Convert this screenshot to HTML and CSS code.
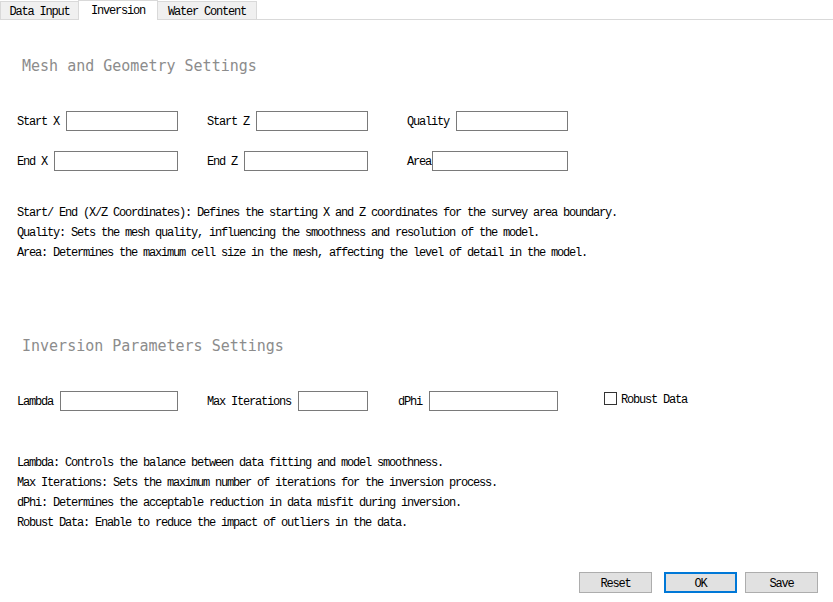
FILE: index.html
```html
<!DOCTYPE html>
<html>
<head>
<meta charset="utf-8">
<link rel="stylesheet" href="styles.css">
</head>
<body>
<div class="tabbar">
  <div class="tab tab-data">Data Input</div>
  <div class="tab tab-inv active">Inversion</div>
  <div class="tab tab-water">Water Content</div>
</div>
<div class="pane">
  <h2 class="section-title first">Mesh and Geometry Settings</h2>
  <div class="fields mesh">
    <label class="field"><span class="lbl">Start X</span><input class="box" type="text"></label>
    <label class="field"><span class="lbl">Start Z</span><input class="box" type="text"></label>
    <label class="field"><span class="lbl">Quality</span><input class="box" type="text"></label>
    <label class="field"><span class="lbl">End X</span><input class="box" type="text"></label>
    <label class="field"><span class="lbl">End Z</span><input class="box" type="text"></label>
    <label class="field tight"><span class="lbl">Area</span><input class="box" type="text"></label>
  </div>
  <div class="desc mesh-desc">
    <p>Start/ End (X/Z Coordinates): Defines the starting X and Z coordinates for the survey area boundary.</p>
    <p>Quality: Sets the mesh quality, influencing the smoothness and resolution of the model.</p>
    <p>Area: Determines the maximum cell size in the mesh, affecting the level of detail in the model.</p>
  </div>

  <h2 class="section-title second">Inversion Parameters Settings</h2>
  <div class="fields inv">
    <label class="field"><span class="lbl">Lambda</span><input class="box" type="text"></label>
    <label class="field"><span class="lbl">Max Iterations</span><input class="box" type="text"></label>
    <label class="field w160"><span class="lbl">dPhi</span><input class="box" type="text"></label>
    <label class="check"><span class="checkbox"></span><span class="check-text">Robust Data</span></label>
  </div>
  <div class="desc inv-desc">
    <p>Lambda: Controls the balance between data fitting and model smoothness.</p>
    <p>Max Iterations: Sets the maximum number of iterations for the inversion process.</p>
    <p>dPhi: Determines the acceptable reduction in data misfit during inversion.</p>
    <p>Robust Data: Enable to reduce the impact of outliers in the data.</p>
  </div>

  <div class="buttons">
    <button class="btn reset">Reset</button>
    <button class="btn ok">OK</button>
    <button class="btn save">Save</button>
  </div>
</div>
</body>
</html>
```
FILE: styles.css
```css
html, body {
  margin: 0;
  padding: 0;
  background: #ffffff;
}
body {
  width: 833px;
  height: 602px;
  overflow: hidden;
  font-family: "Liberation Mono", monospace;
  font-size: 12px;
  letter-spacing: -1.2px;
  color: #000;
}
.tabbar {
  display: flex;
  align-items: flex-end;
  height: 20px;
  box-sizing: border-box;
  border-bottom: 1px solid #d9d9d9;
  background: #ffffff;
}
.tab {
  box-sizing: border-box;
  height: 18px;
  background: #f0f0f0;
  border: 1px solid #d9d9d9;
  border-bottom: none;
  display: flex;
  align-items: flex-start;
  justify-content: center;
  line-height: 14px;
  padding-top: 3px;
}
.tab-data { width: 79px; }
.tab-inv { width: 80px; }
.tab-water { width: 100px; margin-left: -1px; }
.tab.active {
  height: 20px;
  margin-bottom: -1px;
  background: #fff;
  position: relative;
  z-index: 1;
  padding-top: 3px;
  margin-left: -1px;
}
.pane {
  display: flex;
  flex-direction: column;
  height: 582px;
  box-sizing: border-box;
  padding-bottom: 9px;
}
.section-title {
  margin: 0;
  font-family: "DejaVu Sans Mono", monospace;
  font-weight: normal;
  font-size: 15px;
  letter-spacing: 0;
  line-height: 20px;
  color: #8c8c8c;
  padding-left: 22px;
}
.section-title.first { margin-top: 36px; }
.section-title.second { margin-top: 73px; }
.fields {
  display: grid;
  row-gap: 20px;
  padding-left: 17px;
  margin-top: 35px;
}
.fields.mesh {
  grid-template-columns: 190px 200px 161px;
}
.fields.inv {
  grid-template-columns: 190px 191px 206px auto;
}
.field {
  width: 161px;
  height: 20px;
  display: flex;
  align-items: center;
}
.field.w160 { width: 160px; }
.lbl {
  white-space: nowrap;
  margin-right: 7px;
  padding-top: 2px;
}
.field.tight .lbl { margin-right: 1px; }
.box {
  flex: 1;
  min-width: 0;
  height: 20px;
  box-sizing: border-box;
  border: 1px solid #7a7a7a;
  margin: 0;
  padding: 0 2px;
  background: #fff;
  outline: none;
}
.check {
  display: flex;
  align-items: flex-start;
  height: 20px;
  padding-top: 1px;
  box-sizing: border-box;
}
.checkbox {
  width: 13px;
  height: 13px;
  box-sizing: border-box;
  border: 1px solid #333;
  background: #fff;
  margin-right: 4px;
}
.check-text {
  line-height: 17px;
}
.desc {
  padding-top: 1px;
}
.desc p {
  margin: 0;
  line-height: 20px;
  padding-left: 17px;
  white-space: nowrap;
}
.mesh-desc { margin-top: 31px; }
.inv-desc { margin-top: 41px; }
.buttons {
  margin-top: auto;
  display: flex;
  justify-content: flex-end;
  padding-right: 15px;
}
.btn {
  width: 73px;
  height: 21px;
  box-sizing: border-box;
  background: #e1e1e1;
  border: 1px solid #adadad;
  font-family: "Liberation Mono", monospace;
  font-size: 12px;
  letter-spacing: -1.2px;
  color: #000;
  padding: 2px 0 0 0;
  margin: 0;
}
.btn.ok {
  border: 2px solid #0078d7;
  margin-left: 12px;
  margin-right: 8px;
}
```
